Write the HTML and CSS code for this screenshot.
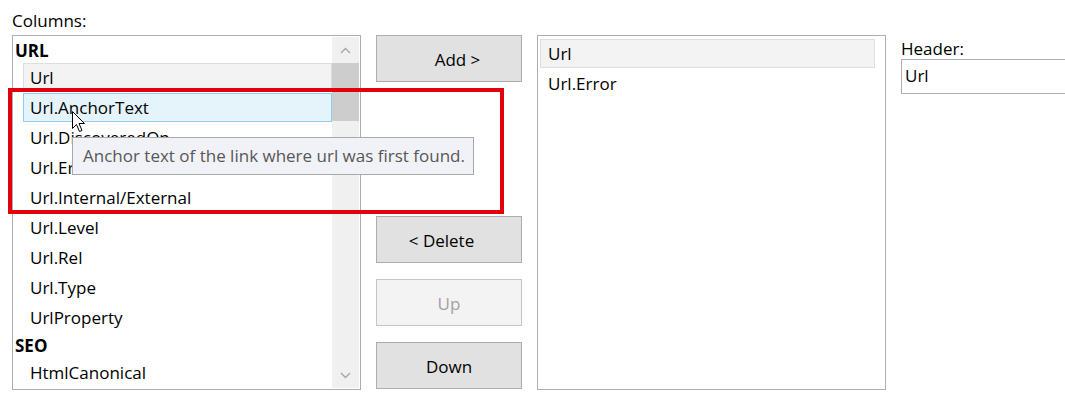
FILE: index.html
```html
<!DOCTYPE html>
<html>
<head>
<meta charset="utf-8">
<link rel="stylesheet" href="styles.css">
</head>
<body>
<div class="dialog">
  <div class="columns-col">
    <div class="label">Columns:</div>
    <div class="listbox">
      <div class="items">
        <div class="group">URL</div>
        <div class="item selected"><span class="box">Url</span></div>
        <div class="item hover"><span class="box">Url.AnchorText</span></div>
        <div class="item"><span class="box">Url.DiscoveredOn</span></div>
        <div class="item"><span class="box">Url.Error</span></div>
        <div class="item"><span class="box">Url.Internal/External</span></div>
        <div class="item"><span class="box">Url.Level</span></div>
        <div class="item"><span class="box">Url.Rel</span></div>
        <div class="item"><span class="box">Url.Type</span></div>
        <div class="item"><span class="box">UrlProperty</span></div>
        <div class="group">SEO</div>
        <div class="item"><span class="box">HtmlCanonical</span></div>
      </div>
      <div class="scrollbar">
        <div class="sb-btn">
          <svg width="11" height="7" viewBox="0 0 11 7"><path d="M1 6 L5.5 1.5 L10 6" fill="none" stroke="#a6a6a6" stroke-width="1.4"/></svg>
        </div>
        <div class="sb-track"><div class="sb-thumb"></div></div>
        <div class="sb-btn">
          <svg width="11" height="7" viewBox="0 0 11 7"><path d="M1 1 L5.5 5.5 L10 1" fill="none" stroke="#a6a6a6" stroke-width="1.4"/></svg>
        </div>
      </div>
    </div>
  </div>

  <div class="buttons">
    <div class="btn btn-add">Add &gt;</div>
    <div class="btn btn-delete">&lt; Delete</div>
    <div class="btn disabled">Up</div>
    <div class="btn">Down</div>
  </div>

  <div class="listbox right">
    <div class="items right-items">
      <div class="item selected"><span class="box">Url</span></div>
      <div class="item"><span class="box">Url.Error</span></div>
    </div>
  </div>

  <div class="header-col">
    <div class="header-label">Header:</div>
    <div class="input">Url</div>
  </div>
</div>

<div class="highlight"></div>
<div class="tooltip">Anchor text of the link where url was first found.</div>
<svg class="cursor" width="14" height="22" viewBox="0 0 14 22">
  <path d="M0.5 0.5 L0.5 17.5 L4.5 13.5 L7.5 20.5 L10 19.5 L7 12.5 L12.5 12.5 Z" fill="#fff" stroke="#000" stroke-width="1" stroke-linejoin="miter"/>
</svg>
</body>
</html>
```

FILE: styles.css
```css
html, body {
  margin: 0;
  padding: 0;
  background: #ffffff;
}

body {
  font-family: "Open Sans", "Noto Sans", sans-serif;
  font-size: 17px;
  color: #000;
  width: 1065px;
  height: 404px;
  overflow: hidden;
  position: relative;
}

.dialog {
  display: flex;
  align-items: flex-start;
  padding-left: 12px;
}

.columns-col {
  display: flex;
  flex-direction: column;
  width: 349px;
  flex-shrink: 0;
}

.label {
  padding-top: 10px;
  height: 22px;
  line-height: 22px;
  margin-bottom: 3px;
}

.listbox {
  box-sizing: border-box;
  width: 349px;
  height: 355px;
  flex-shrink: 0;
  border: 1px solid #abadb3;
  padding: 1px;
  display: flex;
  background: #fff;
}

.items {
  flex: 1;
  overflow: hidden;
}

.group {
  height: 25px;
  line-height: 25px;
  padding-left: 1px;
  font-weight: 700;
  position: relative;
  top: 1px;
}

.item {
  height: 30px;
  box-sizing: border-box;
  padding-top: 1px;
  margin-left: 9px;
  display: flex;
}

.item .box {
  flex: 1;
  box-sizing: border-box;
  height: 29px;
  line-height: 28px;
  padding-left: 6px;
  border: 1px solid transparent;
  white-space: nowrap;
}

.item.selected .box {
  background: #f3f3f3;
  border-color: #dedede;
}

.item.hover .box {
  background: #e5f3fb;
  border-color: #8fcdf0;
}

.scrollbar {
  width: 27px;
  display: flex;
  flex-direction: column;
  background: #f0f0f0;
}

.sb-btn {
  height: 26px;
  display: flex;
  align-items: center;
  justify-content: center;
}

.sb-track {
  flex: 1;
}

.sb-thumb {
  height: 58px;
  background: #cdcdcd;
}

.buttons {
  display: flex;
  flex-direction: column;
  gap: 16px;
  margin-left: 15px;
  padding-top: 35px;
  flex-shrink: 0;
}

.btn {
  box-sizing: border-box;
  width: 146px;
  height: 47px;
  border: 1px solid #adadad;
  background: #e1e1e1;
  display: flex;
  align-items: center;
  justify-content: center;
  padding-top: 2px;
}

.btn-add {
  padding-left: 17px;
}

.btn-delete {
  margin-top: 118px;
  padding-right: 15px;
}

.btn.disabled {
  background: #f3f3f3;
  border-color: #c6c6c6;
  color: #a2a2a2;
}

.listbox.right {
  margin-left: 15px;
  margin-top: 35px;
  padding-top: 2px;
}

.right-items .item {
  margin-left: 1px;
  margin-right: 9px;
}

.right-items .item .box {
  padding-left: 7px;
}

.header-col {
  margin-left: 15px;
  padding-top: 38px;
  flex-shrink: 0;
}

.header-label {
  height: 21px;
  line-height: 22px;
}

.input {
  box-sizing: border-box;
  height: 35px;
  width: 200px;
  border: 1px solid #abadb3;
  line-height: 32px;
  padding-left: 3px;
}

.highlight {
  position: absolute;
  left: 8px;
  top: 88px;
  width: 496px;
  height: 126px;
  box-sizing: border-box;
  border: 4px solid #e2000b;
}

.tooltip {
  position: absolute;
  left: 72px;
  top: 137px;
  width: 402px;
  height: 38px;
  box-sizing: border-box;
  border: 1px solid #a9a9a9;
  background: #f1f2f7;
  color: #575757;
  padding-left: 10px;
  line-height: 36px;
  white-space: nowrap;
}

.cursor {
  position: absolute;
  left: 72px;
  top: 111px;
}
```
